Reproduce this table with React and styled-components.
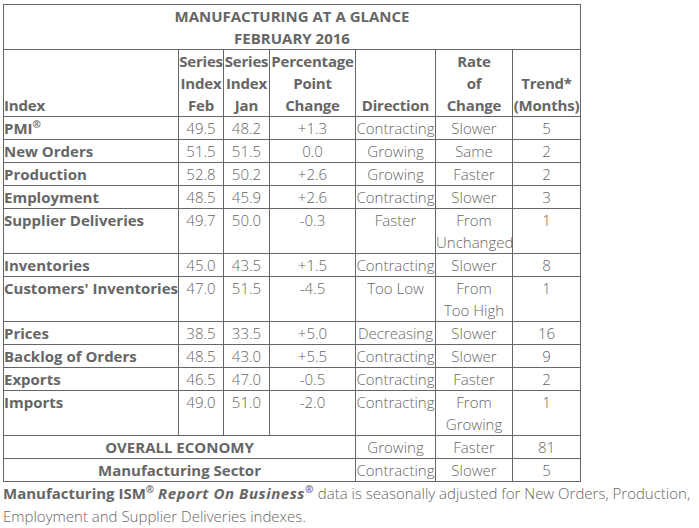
import React from "react";
import styled, { createGlobalStyle } from "styled-components";

const GlobalStyle = createGlobalStyle`
  body {
    margin: 0;
    padding: 4px 3px 0 3px;
    background: #fff;
    font-family: "Open Sans", "Liberation Sans", sans-serif;
    color: #666;
  }
`;

const rows = [
  { name: "PMI", reg: true, feb: "49.5", jan: "48.2", pct: "+1.3", dir: "Contracting", rate: "Slower", trend: "5" },
  { name: "New Orders", feb: "51.5", jan: "51.5", pct: "0.0", dir: "Growing", rate: "Same", trend: "2" },
  { name: "Production", feb: "52.8", jan: "50.2", pct: "+2.6", dir: "Growing", rate: "Faster", trend: "2" },
  { name: "Employment", feb: "48.5", jan: "45.9", pct: "+2.6", dir: "Contracting", rate: "Slower", trend: "3" },
  { name: "Supplier Deliveries", feb: "49.7", jan: "50.0", pct: "-0.3", dir: "Faster", rate: ["From", "Unchanged"], trend: "1" },
  { name: "Inventories", feb: "45.0", jan: "43.5", pct: "+1.5", dir: "Contracting", rate: "Slower", trend: "8" },
  { name: "Customers' Inventories", feb: "47.0", jan: "51.5", pct: "-4.5", dir: "Too Low", rate: ["From", "Too High"], trend: "1" },
  { name: "Prices", feb: "38.5", jan: "33.5", pct: "+5.0", dir: "Decreasing", rate: "Slower", trend: "16" },
  { name: "Backlog of Orders", feb: "48.5", jan: "43.0", pct: "+5.5", dir: "Contracting", rate: "Slower", trend: "9" },
  { name: "Exports", feb: "46.5", jan: "47.0", pct: "-0.5", dir: "Contracting", rate: "Faster", trend: "2" },
  { name: "Imports", feb: "49.0", jan: "51.0", pct: "-2.0", dir: "Contracting", rate: ["From", "Growing"], trend: "1" },
];

const Table = styled.table`
  border-collapse: collapse;
  table-layout: fixed;
  width: 578px;
  font-size: 15px;
  line-height: 22px;
  color: #666;
`;

const Cell = styled.td`
  border: 1px solid #666;
  padding: 0;
  text-align: ${(p) => p.$align || "center"};
  vertical-align: top;
  font-weight: ${(p) => (p.$bold ? 700 : 300)};
  white-space: nowrap;
  overflow: visible;
`;

const HeadCell = styled(Cell).attrs({ as: "th" })`
  font-weight: 700;
  vertical-align: bottom;
  letter-spacing: -0.2px;
`;

const Title = styled.th`
  border: 1px solid #666;
  padding: 0;
  font-weight: 700;
  text-align: center;
  line-height: 22px;
`;

const Reg = styled.sup`
  font-size: 10px;
  line-height: 0;
  vertical-align: 6px;
`;

const Note = styled.p`
  margin: 0;
  font-size: 15px;
  line-height: 23px;
  font-weight: 300;
  color: #666;
`;

const Strong = styled.b`
  font-weight: 700;
  font-style: ${(p) => (p.$italic ? "italic" : "normal")};
  letter-spacing: ${(p) => (p.$italic ? "0.55px" : "0")};
`;

const lines = (v) =>
  Array.isArray(v) ? v.map((t, i) => <div key={i}>{t}</div>) : v;

export default function App() {
  return (
    <>
      <GlobalStyle />
      <Table>
        <colgroup>
          <col style={{ width: 175 }} />
          <col style={{ width: 45 }} />
          <col style={{ width: 46 }} />
          <col style={{ width: 86 }} />
          <col style={{ width: 80 }} />
          <col style={{ width: 77 }} />
          <col style={{ width: 68 }} />
        </colgroup>
        <thead>
          <tr>
            <Title colSpan={7}>
              MANUFACTURING AT A GLANCE
              <br />
              FEBRUARY 2016
            </Title>
          </tr>
          <tr>
            <HeadCell $align="left">Index</HeadCell>
            <HeadCell>Series<br />Index<br />Feb</HeadCell>
            <HeadCell>Series<br />Index<br />Jan</HeadCell>
            <HeadCell>Percentage<br />Point<br />Change</HeadCell>
            <HeadCell>Direction</HeadCell>
            <HeadCell>Rate<br />of<br />Change</HeadCell>
            <HeadCell>Trend*<br />(Months)</HeadCell>
          </tr>
        </thead>
        <tbody>
          {rows.map((r) => (
            <tr key={r.name}>
              <Cell $align="left" $bold>
                {r.name}
                {r.reg && <Reg>®</Reg>}
              </Cell>
              <Cell>{r.feb}</Cell>
              <Cell>{r.jan}</Cell>
              <Cell>{r.pct}</Cell>
              <Cell>{r.dir}</Cell>
              <Cell>{lines(r.rate)}</Cell>
              <Cell>{r.trend}</Cell>
            </tr>
          ))}
          <tr>
            <Cell colSpan={4} $bold>OVERALL ECONOMY</Cell>
            <Cell>Growing</Cell>
            <Cell>Faster</Cell>
            <Cell>81</Cell>
          </tr>
          <tr>
            <Cell colSpan={4} $bold>Manufacturing Sector</Cell>
            <Cell>Contracting</Cell>
            <Cell>Slower</Cell>
            <Cell>5</Cell>
          </tr>
        </tbody>
      </Table>
      <Note>
        <Strong>Manufacturing ISM<Reg>®</Reg></Strong>{" "}
        <Strong $italic>Report On Business<Reg>®</Reg></Strong> data is
        seasonally adjusted for New Orders, Production, Employment and Supplier
        Deliveries indexes.
      </Note>
    </>
  );
}
